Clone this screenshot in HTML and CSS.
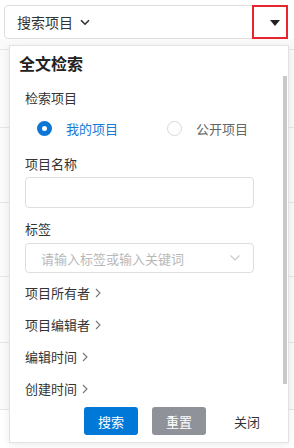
FILE: index.html
```html
<!DOCTYPE html>
<html lang="zh-CN">
<head>
  <meta charset="UTF-8" />
  <meta name="viewport" content="width=device-width, initial-scale=1" />
  <title>搜索项目</title>
  <link rel="stylesheet" href="styles.css">
</head>
<body>

<!-- Search bar -->
<div class="topbar">
  <span class="topbar-title">搜索项目</span>
  <svg class="chev-down" width="10" height="7" viewBox="0 0 10 7"><path d="M1 1.2 L5 5.2 L9 1.2" fill="none" stroke="#333" stroke-width="1.6"/></svg>
  <div class="toggle"><span class="caret"></span></div>
</div>

<!-- Table rows behind the dropdown -->
<div class="rows">
  <div class="row r1"></div>
  <div class="row r2"></div>
  <div class="row r3"></div>
  <div class="row r4"></div>
  <div class="row r5"></div>
  <div class="row r6"></div>
</div>

<!-- Full-text search dropdown -->
<div class="panel">
  <div class="scrollbar"></div>
  <h2 class="panel-title">全文检索</h2>
  <div class="panel-body">
    <div class="label">检索项目</div>
    <div class="radios">
      <label class="radio checked"><span class="dot"></span>我的项目</label>
      <label class="radio"><span class="dot"></span>公开项目</label>
    </div>

    <div class="label gap-lg">项目名称</div>
    <div class="input"></div>

    <div class="label gap-md">标签</div>
    <div class="input select">
      <span class="placeholder">请输入标签或输入关键词</span>
      <svg width="10" height="6" viewBox="0 0 10 6"><path d="M0.5 0.5 L5 5 L9.5 0.5" fill="none" stroke="#c8c8c8" stroke-width="1.1"/></svg>
    </div>

    <div class="expander first">项目所有者 <svg width="6" height="10" viewBox="0 0 6 10"><path d="M1 1 L5 5 L1 9" fill="none" stroke="#777" stroke-width="1.1"/></svg></div>
    <div class="expander">项目编辑者 <svg width="6" height="10" viewBox="0 0 6 10"><path d="M1 1 L5 5 L1 9" fill="none" stroke="#777" stroke-width="1.1"/></svg></div>
    <div class="expander">编辑时间 <svg width="6" height="10" viewBox="0 0 6 10"><path d="M1 1 L5 5 L1 9" fill="none" stroke="#777" stroke-width="1.1"/></svg></div>
    <div class="expander">创建时间 <svg width="6" height="10" viewBox="0 0 6 10"><path d="M1 1 L5 5 L1 9" fill="none" stroke="#777" stroke-width="1.1"/></svg></div>
  </div>

  <div class="actions">
    <button class="btn btn-primary">搜索</button>
    <button class="btn btn-grey">重置</button>
    <button class="btn btn-plain">关闭</button>
  </div>
</div>

</body>
</html>
```

FILE: styles.css
```css
* {
  margin: 0;
  padding: 0;
  box-sizing: border-box;
}

body {
  font-family: "Noto Sans CJK SC", "Noto Sans", sans-serif;
  color: #333;
  background: #fff;
  width: 294px;
  height: 448px;
  overflow: hidden;
  position: relative;
}

/* Top search bar */
.topbar {
  display: flex;
  align-items: center;
  height: 34px;
  margin: 5px 6px 0 4px;
  border: 1px solid #dedede;
  border-radius: 4px;
  background: #fff;
}

.topbar-title {
  font-size: 14px;
  padding-left: 12px;
  color: #333;
}

.chev-down {
  margin-left: 7px;
}

.toggle {
  margin: -1px -1px -1px auto;
  align-self: stretch;
  width: 36px;
  border: 2px solid #e8242c;
  display: flex;
  align-items: center;
  justify-content: flex-end;
  padding-right: 6px;
}

.caret {
  width: 0;
  height: 0;
  border-left: 5px solid transparent;
  border-right: 5px solid transparent;
  border-top: 6px solid #222;
  margin-top: 1px;
}

/* Background rows */
.rows {
  background: #fafafa;
}

.row {
  border-bottom: 1px solid #e6e6e6;
}

.r1 { height: 11px; }
.r2 { height: 78px; }
.r3 { height: 75px; }
.r4 { height: 74px; }
.r5 { height: 66px; }
.r6 { height: 67px; }

/* Dropdown panel */
.panel {
  position: absolute;
  left: 9px;
  top: 45px;
  width: 280px;
  height: 398px;
  background: #fff;
  border: 1px solid #e2e2e2;
  box-shadow: 0 2px 8px rgba(0, 0, 0, 0.08);
  padding: 0 9px;
}

.scrollbar {
  position: absolute;
  right: 1px;
  top: 30px;
  width: 4px;
  height: 308px;
  background: #c9c9c9;
}

.panel-title {
  font-size: 16px;
  font-weight: bold;
  line-height: 24px;
  margin-top: 5px;
  color: #222;
}

.panel-body {
  padding-left: 6px;
  width: 245px;
}

.label {
  font-size: 13px;
  line-height: 20px;
  margin-top: 13px;
}

.label.gap-lg { margin-top: 16px; }
.label.gap-md { margin-top: 11px; }

.radios {
  display: flex;
  margin-top: 10px;
  padding-left: 12px;
  height: 20px;
}

.radio {
  display: flex;
  align-items: center;
  flex-shrink: 0;
  width: 130px;
  font-size: 13px;
  color: #666;
}

.radio .dot {
  width: 15px;
  height: 15px;
  border-radius: 50%;
  border: 1px solid #d8d8d8;
  margin-right: 14px;
  background: #fff;
}

.radio.checked {
  color: #1a78d7;
}

.radio.checked .dot {
  border: 5px solid #0b76d6;
  background: #fff;
}

.input {
  height: 31px;
  width: 229px;
  margin-top: 3px;
  border: 1px solid #dedede;
  border-radius: 4px;
}

.select {
  display: flex;
  align-items: center;
  justify-content: space-between;
  padding: 0 13px 0 15px;
  height: 30px;
  margin-top: 4px;
}

.placeholder {
  font-size: 13px;
  color: #b8b8b8;
}

.expander {
  font-size: 13px;
  line-height: 20px;
  margin-top: 12px;
  display: flex;
  align-items: center;
}

.expander svg {
  margin-left: 5px;
}

.expander.first {
  margin-top: 10px;
}

/* Action buttons */
.actions {
  display: flex;
  justify-content: flex-end;
  gap: 14px;
  margin-top: 8px;
  padding-right: 5px;
}

.btn {
  width: 54px;
  height: 28px;
  border: none;
  border-radius: 3px;
  font-family: inherit;
  font-size: 13px;
  color: #fff;
}

.btn-primary { background: #0078d7; }
.btn-grey { background: #8f9299; }

.btn-plain {
  background: none;
  color: #333;
}
```
